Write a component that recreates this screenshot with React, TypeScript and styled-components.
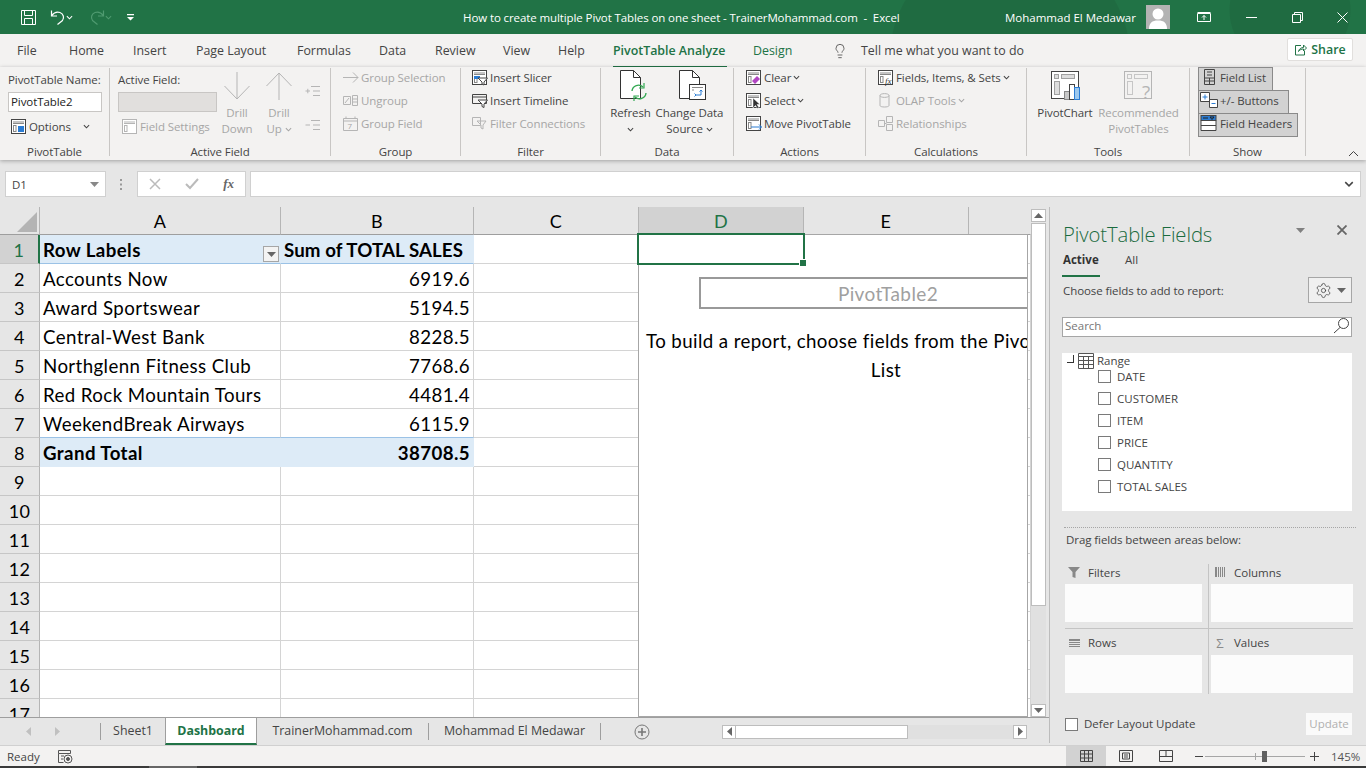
import React from "react"
import styled, { createGlobalStyle } from "styled-components"
import { Settings, Lightbulb } from "lucide-react"

const UI = `"Open Sans", "Noto Sans", sans-serif`
const CELL = `Lato, "Liberation Sans", sans-serif`

const GREEN = "#217346"
const INK = "#444"
const OFF = "#a6a6a6"
const LINE_OFF = "#b5b5b5"
const BLUE = "#2b7cd3"

const Global = createGlobalStyle`
  html, body { margin: 0; padding: 0; background: #e6e6e6; overflow: hidden; }
  * { box-sizing: border-box; }
`

const Page = styled.div`
  width: 1366px;
  height: 768px;
  display: flex;
  flex-direction: column;
  overflow: hidden;
  font-family: ${UI};
  color: ${INK};
  font-size: 11.5px;
`

/* title bar */
const TitleBar = styled.div`
  height: 34px;
  flex: none;
  display: flex;
  align-items: center;
  color: #fff;
  background:
    radial-gradient(circle at 1010px 60px, #1f6b41 0 120px, transparent 121px),
    radial-gradient(circle at 1290px 10px, #1f6b41 0 60px, transparent 61px),
    ${GREEN};
`

const Quick = styled.div`
  width: 463px;
  flex: none;
  display: flex;
  align-items: center;
  padding-left: 20px;
`

const QuickBtn = styled.div<{ $w: number }>`
  width: ${(p) => p.$w}px;
  flex: none;
  display: flex;
  align-items: center;
`

const DocTitle = styled.div`
  width: 542px;
  flex: none;
  font-size: 11.5px;
  white-space: pre;
  letter-spacing: -0.1px;
`

const UserName = styled.div`
  width: 141px;
  flex: none;
  font-size: 11.5px;
  white-space: nowrap;
`

const Avatar = styled.div`
  width: 24px;
  height: 24px;
  flex: none;
  background: #b3b3b3;
  overflow: hidden;
`

const WinBtn = styled.div<{ $w: number }>`
  width: ${(p) => p.$w}px;
  flex: none;
  display: flex;
  justify-content: center;
`

/* ribbon tabs */
const TabRow = styled.div`
  height: 33px;
  flex: none;
  background: #f3f2f1;
  display: flex;
  align-items: center;
  padding-left: 17px;
  font-size: 12.4px;
`

const MenuTab = styled.div<{ $w: number; $on?: boolean; $tool?: boolean }>`
  width: ${(p) => p.$w}px;
  flex: none;
  position: relative;
  white-space: nowrap;
  color: ${(p) => (p.$tool || p.$on ? GREEN : INK)};
  font-weight: ${(p) => (p.$on ? 600 : 400)};
`

const TabLine = styled.div`
  position: absolute;
  left: 0;
  bottom: -9px;
  width: 114px;
  height: 2px;
  background: ${GREEN};
`

const TellMe = styled.div`
  width: 455px;
  flex: none;
  display: flex;
  align-items: center;
  gap: 13px;
  white-space: nowrap;
`

const ShareBtn = styled.div`
  width: 66px;
  height: 23px;
  flex: none;
  margin-bottom: 3px;
  display: flex;
  align-items: center;
  justify-content: center;
  gap: 4px;
  background: #fff;
  border: 1px solid #e1dfdd;
  border-radius: 2px;
  color: ${GREEN};
  font-weight: 600;
`

/* ribbon */
const Ribbon = styled.div`
  height: 93px;
  flex: none;
  background: #f3f2f1;
  display: flex;
  position: relative;
  z-index: 2;
  letter-spacing: -0.08px;
  box-shadow: 0 1px 4px rgba(0, 0, 0, 0.3);
`

const Group = styled.div<{ $w: number }>`
  width: ${(p) => p.$w}px;
  flex: none;
  display: flex;
  flex-direction: column;
  position: relative;
  &::after {
    content: "";
    position: absolute;
    right: 0;
    top: 1px;
    bottom: 4px;
    width: 1px;
    background: #c8c6c4;
  }
`

const GroupBody = styled.div<{ $pad?: number }>`
  height: 73px;
  display: flex;
  padding-left: ${(p) => p.$pad ?? 0}px;
`

const GroupLabel = styled.div`
  height: 20px;
  text-align: center;
  line-height: 23px;
  padding-right: 1px;
  white-space: nowrap;
`

const Stack = styled.div<{ $w?: number }>`
  display: flex;
  flex-direction: column;
  margin-top: -1px;
  ${(p) => (p.$w ? `width: ${p.$w}px; flex: none;` : "")}
`

const ToggleStack = styled.div`
  display: flex;
  flex-direction: column;
`

const Row = styled.div<{ $off?: boolean; $in?: number }>`
  height: 23px;
  display: flex;
  align-items: center;
  gap: 2px;
  padding-left: ${(p) => p.$in ?? 0}px;
  white-space: nowrap;
  color: ${(p) => (p.$off ? OFF : INK)};
`

const OptionsText = styled.span`
  margin-right: 10px;
`

const Caption = styled.div`
  height: 24px;
  line-height: 27px;
  white-space: nowrap;
`

const NameInput = styled.div<{ $off?: boolean }>`
  width: ${(p) => (p.$off ? 99 : 94)}px;
  height: 20px;
  margin: 2px 0 3px;
  padding-left: 2px;
  line-height: 18px;
  background: ${(p) => (p.$off ? "#e1dfdd" : "#fff")};
  border: 1px solid #c8c6c4;
  color: #222;
`

const Tall = styled.div<{ $w: number; $off?: boolean }>`
  width: ${(p) => p.$w}px;
  flex: none;
  display: flex;
  flex-direction: column;
  align-items: center;
  text-align: center;
  white-space: nowrap;
  line-height: 16px;
  color: ${(p) => (p.$off ? OFF : INK)};
`

const TallIcon = styled.div`
  height: 34px;
  margin-bottom: 4px;
  display: flex;
  align-items: flex-end;
  justify-content: center;
`

const SideBtn = styled.div<{ $h: number }>`
  height: ${(p) => p.$h}px;
  padding: 14px 0 0 5px;
  display: flex;
  align-items: center;
`

const ToggleBtn = styled.div<{ $w: number }>`
  width: ${(p) => p.$w}px;
  height: 24px;
  margin-bottom: -1px;
  display: flex;
  align-items: center;
  padding: 0 0 4px 1px;
  background: #d2d2d2;
  border: 1px solid #8a8a8a;
  white-space: nowrap;
`

const Collapse = styled.div`
  position: absolute;
  right: 7px;
  bottom: 3px;
  display: flex;
`

/* formula bar */
const FormulaBar = styled.div`
  height: 47px;
  flex: none;
  background: #e6e6e6;
  display: flex;
  align-items: flex-start;
  padding: 11px 5px 0;
`

const NameBox = styled.div`
  width: 101px;
  height: 26px;
  flex: none;
  display: flex;
  align-items: center;
  justify-content: space-between;
  padding: 0 6px;
  background: #fff;
  border: 1px solid #d0d0d0;
  color: #444;
`

const Grip = styled.div`
  width: 31px;
  flex: none;
  height: 26px;
  display: flex;
  align-items: center;
  justify-content: center;
  color: #8a8a8a;
`

const FxBox = styled.div`
  width: 109px;
  height: 26px;
  flex: none;
  display: flex;
  align-items: center;
  justify-content: space-between;
  padding: 0 11px 0 11px;
  background: #fff;
  border: 1px solid #d0d0d0;
`

const FxText = styled.span`
  font-family: "Liberation Serif", serif;
  font-style: italic;
  font-weight: 700;
  font-size: 13px;
  color: #666;
`

const FormulaInput = styled.div`
  flex: 1;
  height: 26px;
  margin-left: 4px;
  display: flex;
  align-items: center;
  justify-content: flex-end;
  padding-right: 6px;
  background: #fff;
  border: 1px solid #d0d0d0;
`

/* main */
const Main = styled.div`
  height: 538px;
  flex: none;
  display: flex;
`

const Workbook = styled.div`
  width: 1049px;
  flex: none;
  display: flex;
  flex-direction: column;
`

const SheetWrap = styled.div`
  height: 510px;
  flex: none;
  display: flex;
`

const Sheet = styled.div`
  width: 1031px;
  flex: none;
  position: relative;
  overflow: hidden;
  background: #fff;
  display: grid;
  grid-template-columns: 40px 241px 193px 165px 165px 165px 62px;
  grid-template-rows: 28px repeat(17, 29px);
  font-family: ${CELL};
  font-size: 18.7px;
  letter-spacing: 0.4px;
  color: #000;
`

const Corner = styled.div`
  background: #e6e6e6;
  border-right: 1px solid #b5b5b5;
  border-bottom: 1px solid #9e9e9e;
  position: relative;
  &::after {
    content: "";
    position: absolute;
    left: 17px;
    top: 5px;
    width: 20px;
    height: 20px;
    background: #b4b4b4;
    clip-path: polygon(100% 0, 100% 100%, 0 100%);
  }
`

const ColHead = styled.div<{ $on?: boolean; $last?: boolean }>`
  display: flex;
  align-items: center;
  justify-content: center;
  font-size: 18px;
  background: ${(p) => (p.$on ? "#d2d2d2" : "#e6e6e6")};
  color: ${(p) => (p.$on ? GREEN : "#000")};
  border-right: 1px solid ${(p) => (p.$last ? "#e6e6e6" : "#b5b5b5")};
  border-bottom: 1px solid #9e9e9e;
`

const RowHead = styled.div<{ $on?: boolean }>`
  display: flex;
  align-items: center;
  justify-content: center;
  padding-top: 2px;
  font-size: 18px;
  background: ${(p) => (p.$on ? "#d2d2d2" : "#e6e6e6")};
  color: ${(p) => (p.$on ? GREEN : "#000")};
  border-right: ${(p) => (p.$on ? `2px solid ${GREEN}` : "1px solid #b5b5b5")};
  border-bottom: 1px solid #c6c6c6;
`

const Cell = styled.div<{ $kind?: "head" | "total"; $num?: boolean; $lined?: boolean; $fit?: boolean }>`
  display: flex;
  align-items: center;
  justify-content: ${(p) => (p.$num ? "flex-end" : "flex-start")};
  padding: 2px 3px 0;
  position: relative;
  white-space: nowrap;
  letter-spacing: ${(p) => (p.$fit ? 0.1 : 0.4)}px;
  font-weight: ${(p) => (p.$kind ? 700 : 400)};
  background: ${(p) => (p.$kind ? "#ddebf7" : "#fff")};
  border-right: 1px solid ${(p) => (p.$kind ? "#ddebf7" : "#d4d4d4")};
  border-bottom: 1px solid ${(p) => (p.$kind === "head" ? "#9bc2e6" : p.$lined ? "#9bc2e6" : p.$kind ? "#ddebf7" : "#d4d4d4")};
`

const FilterBtn = styled.div`
  position: absolute;
  right: 1px;
  bottom: 1px;
  width: 16px;
  height: 16px;
  background: #f3f3f3;
  border: 1px solid #a6a6a6;
  display: flex;
  align-items: center;
  justify-content: center;
`

const Placeholder = styled.div`
  position: absolute;
  left: 638px;
  top: 27px;
  width: 390px;
  bottom: 0;
  background: #fff;
  border: 1px solid #a6a6a6;
  overflow: hidden;
  display: flex;
  flex-direction: column;
  padding: 42px 0 0 60px;
`

const PivotName = styled.div`
  width: 378px;
  height: 32px;
  flex: none;
  border: 2px solid #999;
  display: flex;
  align-items: center;
  justify-content: center;
  color: #a0a0a0;
  font-size: 19px;
`

const PivotHint = styled.div`
  width: 480px;
  margin: 18px 0 0 -53px;
  flex: none;
  text-align: center;
  line-height: 29px;
  white-space: nowrap;
`

const Selected = styled.div`
  position: absolute;
  left: 637px;
  top: 26px;
  width: 168px;
  height: 32px;
  border: 2px solid ${GREEN};
  &::after {
    content: "";
    position: absolute;
    right: -3px;
    bottom: -3px;
    width: 6px;
    height: 6px;
    background: ${GREEN};
    border: 1px solid #fff;
    border-right: 0;
    border-bottom: 0;
  }
`

const VScroll = styled.div`
  width: 18px;
  flex: none;
  padding: 2px 3px 0 0;
  background: #e6e6e6;
  display: flex;
  flex-direction: column;
`

const ScrollBtn = styled.div<{ $w?: number }>`
  width: ${(p) => p.$w ?? 15}px;
  height: ${(p) => (p.$w ? 14 : 13)}px;
  flex: none;
  background: #fff;
  border: 1px solid #bdbdbd;
  display: flex;
  align-items: center;
  justify-content: center;
`

const VThumb = styled.div`
  height: 383px;
  flex: none;
  margin-top: 1px;
  background: #fff;
  border: 1px solid #bdbdbd;
`

const VTrack = styled.div`
  flex: 1;
  background: #e0e0e0;
`

/* sheet tabs */
const SheetTabs = styled.div`
  height: 28px;
  flex: none;
  display: flex;
  align-items: center;
  background: #e6e6e6;
  border-top: 1px solid #9e9e9e;
  font-size: 12.4px;
`

const TabNav = styled.div`
  width: 100px;
  height: 100%;
  flex: none;
  display: flex;
  align-items: center;
  gap: 24px;
  padding-left: 26px;
`

const SheetTab = styled.div<{ $w: number; $on?: boolean; $open?: boolean }>`
  width: ${(p) => p.$w}px;
  height: ${(p) => (p.$on ? 27 : 17)}px;
  flex: none;
  display: flex;
  align-items: center;
  justify-content: center;
  padding-bottom: ${(p) => (p.$on ? 0 : 2)}px;
  white-space: nowrap;
  color: ${(p) => (p.$on ? GREEN : INK)};
  font-weight: ${(p) => (p.$on ? 700 : 400)};
  background: ${(p) => (p.$on ? "#fff" : "transparent")};
  border-left: ${(p) => (p.$open ? "0" : "1px solid #9e9e9e")};
  border-right: ${(p) => (p.$on ? "1px solid #9e9e9e" : "0")};
  border-bottom: ${(p) => (p.$on ? `2px solid ${GREEN}` : "0")};
`

const TabEnd = styled.div`
  width: 1px;
  height: 17px;
  flex: none;
  background: #9e9e9e;
`

const AddSheet = styled.div`
  width: 82px;
  flex: none;
  display: flex;
  justify-content: center;
`

const HScroll = styled.div`
  width: 305px;
  height: 14px;
  margin-left: 39px;
  flex: none;
  display: flex;
  background: #e0e0e0;
`

const HThumb = styled.div`
  width: 172px;
  flex: none;
  background: #fff;
  border: 1px solid #bdbdbd;
  border-left: 0;
`

const HFill = styled.div`
  flex: 1;
`

/* field pane */
const Pane = styled.div`
  width: 317px;
  flex: none;
  background: #e6e6e6;
  border-left: 1px solid #bcbcbc;
  padding: 10px 14px 0 12px;
  display: flex;
  flex-direction: column;
  margin-bottom: 2px;
`

const PaneHead = styled.div`
  height: 34px;
  flex: none;
  display: flex;
  align-items: center;
  justify-content: space-between;
`

const PaneTitle = styled.div`
  font-size: 20.3px;
  font-weight: 300;
  color: #1a6b3e;
  letter-spacing: -0.1px;
  padding-left: 1px;
  white-space: nowrap;
`

const PaneTools = styled.div`
  display: flex;
  align-items: center;
  gap: 32px;
  margin-top: -8px;
  padding-right: 5px;
`

const PaneTabs = styled.div`
  height: 26px;
  flex: none;
  display: flex;
  gap: 24px;
`

const PaneTab = styled.div<{ $on?: boolean }>`
  height: 26px;
  ${(p) => (p.$on ? "width: 38px;" : "")}
  line-height: 18px;
  padding-left: 1px;
  font-weight: ${(p) => (p.$on ? 700 : 400)};
  color: ${(p) => (p.$on ? "#333" : INK)};
  border-bottom: ${(p) => (p.$on ? `2px solid ${GREEN}` : "0")};
  white-space: nowrap;
`

const ChooseRow = styled.div`
  height: 26px;
  flex: none;
  display: flex;
  align-items: center;
  justify-content: space-between;
  padding-left: 1px;
  letter-spacing: -0.08px;
`

const GearBtn = styled.div`
  width: 44px;
  height: 26px;
  display: flex;
  align-items: center;
  justify-content: center;
  gap: 5px;
  border: 1px solid #a6a6a6;
  background: #f0f0f0;
`

const SearchBox = styled.div`
  height: 20px;
  flex: none;
  margin-top: 14px;
  display: flex;
  align-items: center;
  justify-content: space-between;
  padding: 0 1px 3px 2px;
  background: #fff;
  border: 1px solid #a6a6a6;
  color: #777;
`

const FieldList = styled.div`
  height: 158px;
  flex: none;
  margin-top: 16px;
  background: #fff;
  padding: 0 0 0 4px;
`

const RangeRow = styled.div`
  height: 15px;
  margin-bottom: -3px;
  display: flex;
  align-items: center;
`

const TreeMark = styled.div`
  width: 12px;
  height: 8px;
  flex: none;
  position: relative;
  &::after {
    content: "";
    position: absolute;
    left: 1px;
    top: -2px;
    width: 6px;
    height: 7px;
    border-right: 1px solid #333;
    border-bottom: 1px solid #333;
  }
`

const RangeLabel = styled.span`
  margin-left: 3px;
`

const FieldRow = styled.div`
  height: 22px;
  display: flex;
  align-items: center;
  gap: 6px;
  padding-left: 32px;
  white-space: nowrap;
`

const Check = styled.div`
  width: 13px;
  height: 13px;
  flex: none;
  background: #fff;
  border: 1px solid #7a7a7a;
`

const Dotted = styled.div`
  flex: none;
  margin: 16px -4px 0 2px;
  border-top: 1px dotted #a6a6a6;
`

const DragLabel = styled.div`
  height: 18px;
  line-height: 18px;
  flex: none;
  margin: 3px 0 15px 4px;
  white-space: nowrap;
  letter-spacing: -0.08px;
`

const Areas = styled.div`
  margin-left: 3px;
  flex: none;
  display: grid;
  grid-template-columns: 144px 144px;
`

const AreaCell = styled.div<{ $lower?: boolean; $right?: boolean }>`
  padding-top: ${(p) => (p.$lower ? 6 : 0)}px;
  height: 65px;
  padding-right: ${(p) => (p.$right ? 0 : 6)}px;
  padding-left: ${(p) => (p.$right ? 2 : 0)}px;
  border-right: ${(p) => (p.$right ? "0" : "1px solid #c4c4c4")};
  border-bottom: ${(p) => (p.$lower ? "0" : "1px solid #c4c4c4")};
`

const AreaLabel = styled.div<{ $lower?: boolean }>`
  height: 20px;
  display: flex;
  align-items: flex-start;
  line-height: ${(p) => (p.$lower ? 16 : 18)}px;
  gap: 8px;
  padding-left: 3px;
`

const AreaIcon = styled.div`
  width: 12px;
  height: 16px;
  flex: none;
  display: flex;
  align-items: center;
  justify-content: center;
  color: #8a8a8a;
  font-size: 13px;
`

const AreaBox = styled.div`
  height: 38px;
  background: #fcfcfc;
`

const PaneFoot = styled.div`
  height: 22px;
  flex: none;
  margin: 19px 0 0 3px;
  display: flex;
  align-items: center;
  justify-content: space-between;
`

const Defer = styled.div`
  display: flex;
  align-items: center;
  gap: 6px;
  line-height: 14px;
  white-space: nowrap;
`

const UpdateBtn = styled.div`
  width: 46px;
  height: 22px;
  display: flex;
  align-items: center;
  justify-content: center;
  padding-bottom: 2px;
  background: #fafafa;
  color: #b0b0b0;
`

/* status bar */
const StatusBar = styled.div`
  height: 21px;
  flex: none;
  display: flex;
  align-items: center;
  background: #f3f2f1;
  border-top: 1px solid #d0d0d0;
  padding-left: 7px;
`

const StatusText = styled.div`
  width: 51px;
  flex: none;
`

const ViewBtn = styled.div<{ $on?: boolean }>`
  width: 40px;
  height: 20px;
  flex: none;
  display: flex;
  align-items: center;
  justify-content: center;
  background: ${(p) => (p.$on ? "#d2d2d2" : "transparent")};
`

const StatusFill = styled.div`
  width: 993px;
  flex: none;
`

const ZoomBar = styled.div`
  flex: none;
  margin-left: 9px;
  display: flex;
  align-items: center;
  gap: 2px;
`

const ZoomPlus = styled.div`
  margin-left: 3px;
  display: flex;
`

const ZoomTrack = styled.div`
  width: 100px;
  height: 1px;
  flex: none;
  background: #a6a6a6;
  position: relative;
`

const ZoomMark = styled.div`
  position: absolute;
  left: 50px;
  top: -3px;
  width: 1px;
  height: 7px;
  background: #a6a6a6;
`

const ZoomThumb = styled.div`
  position: absolute;
  left: 57px;
  top: -5px;
  width: 5px;
  height: 11px;
  background: #5f5f5f;
`

const ZoomText = styled.div`
  margin-left: 12px;
  color: #555;
`

const Taskbar = styled.div`
  height: 2px;
  flex: none;
  display: flex;
  background: #3a3a3a;
`

const TaskGap = styled.div`
  width: 149px;
  flex: none;
`

const TaskLit = styled.div`
  width: 48px;
  flex: none;
  background: #666;
`

/* icons */
type IconProps = { c?: string; children?: React.ReactNode }

function Small({ children }: IconProps) {
  return (
    <svg width="17" height="17" viewBox="0 0 17 17" fill="none" style={{ flex: "none" }}>
      {children}
    </svg>
  )
}

function Chevron({ c = INK, s = 7 }: { c?: string; s?: number }) {
  return (
    <svg width={s} height={s} viewBox="0 0 8 8" fill="none" style={{ flex: "none" }}>
      <path d="M1 2.500 4 5.500 7 2.500" stroke={c} strokeWidth="1.200" />
    </svg>
  )
}

function Tri({ c = "#666", up }: { c?: string; up?: boolean }) {
  return (
    <svg width="9" height="5" viewBox="0 0 9 5" style={{ flex: "none" }}>
      <path d={up ? "M4.500 0 9 5H0Z" : "M0 0H9L4.500 5Z"} fill={c} />
    </svg>
  )
}

function Panel({ c = INK, children }: IconProps) {
  return (
    <Small>
      <rect x="1.500" y="1.500" width="14" height="14" stroke={c} fill="#fff" />
      <path d="M3 4h11M3 5.500h11" stroke={c === INK ? "#888" : c} />
      <rect x="3.500" y="7.500" width="2.500" height="6" stroke={c === INK ? "#888" : c} />
      {children}
    </Small>
  )
}

function SaveIcon() {
  return (
    <svg width="17" height="17" viewBox="0 0 17 17" fill="none" stroke="#fff">
      <path d="M1.500 1.500h14v14h-14zM4.500 1.500v5h8v-5M4.500 15.500v-6h8v6" />
    </svg>
  )
}

function UndoIcon({ c = "#fff", flip }: { c?: string; flip?: boolean }) {
  return (
    <svg width="16" height="17" viewBox="0 0 16 17" fill="none" stroke={c} strokeWidth="1.200" style={flip ? { transform: "scaleX(-1)" } : undefined}>
      <path d="M1.500 1.500V7h5.500M1.800 6.500C4 3.500 7 2.500 10 3.500c3.500 1.200 4.500 5.500 2.500 8L7.500 15.500" />
    </svg>
  )
}

function Customize() {
  return (
    <svg width="7" height="8" viewBox="0 0 7 8">
      <path d="M0 1h7v1.200H0zM0 4h7L3.500 7.500z" fill="#fff" />
    </svg>
  )
}

function Drill({ up, c = LINE_OFF }: { up?: boolean; c?: string }) {
  return (
    <svg width="28" height="30" viewBox="0 0 28 30" fill="none" stroke={c} style={up ? { transform: "scaleY(-1)" } : undefined}>
      <path d="M14 1v27M1.500 15 14 28 26.500 15" />
    </svg>
  )
}

function PlusLines({ minus }: { minus?: boolean }) {
  return (
    <svg width="16" height="12" viewBox="0 0 16 12" fill="none" stroke={LINE_OFF}>
      <path d="M6 1.500h9M8 6h7M8 10.500h7" />
      <path d={minus ? "M0.500 6h4.500" : "M0.500 6h4.500M2.800 3.800v4.500"} />
    </svg>
  )
}

function Doc({ children }: IconProps) {
  return (
    <svg width="32" height="32" viewBox="0 0 32 32" fill="none">
      <path d="M5.500 1.500h13l7 7v21h-20z" stroke="#333" fill="#fff" />
      <path d="M18.500 1.500v7h7" stroke="#333" />
      {children}
    </svg>
  )
}

function ChartIcon({ off }: { off?: boolean }) {
  const c = off ? "#b5b5b5" : "#444"
  const g = off ? "#c6c6c6" : "#a0a0a0"
  return (
    <svg width="31" height="31" viewBox="0 0 31 31" fill="none">
      <rect x="1.500" y="1.500" width="27" height="27" stroke={c} fill={off ? "none" : "#fff"} />
      <rect x="4.500" y="4.500" width="4" height="4" stroke={g} fill={off ? "none" : "#ddd"} />
      <rect x="11.500" y="4.500" width="13" height="4" stroke={g} fill={off ? "none" : "#ddd"} />
      <rect x="4.500" y="11.500" width="5" height="13" stroke={g} fill={off ? "none" : "#ddd"} />
      {off ? (
        <text x="19" y="29" fontSize="19" fill="#b5b5b5" fontFamily={UI}>?</text>
      ) : (
        <g>
          <rect x="14.500" y="21.500" width="5" height="8" fill="#c8c8c8" stroke="#888" />
          <rect x="19.500" y="14.500" width="5" height="15" fill="#fff" stroke="#444" />
          <rect x="24.500" y="17.500" width="5" height="12" fill="#9cc8ee" stroke={BLUE} />
        </g>
      )}
    </svg>
  )
}

const FIELDS = ["DATE", "CUSTOMER", "ITEM", "PRICE", "QUANTITY", "TOTAL SALES"]

const ROWS: [string, string, ("head" | "total")?][] = [
  ["Row Labels", "Sum of TOTAL SALES", "head"],
  ["Accounts Now", "6919.6"],
  ["Award Sportswear", "5194.5"],
  ["Central-West Bank", "8228.5"],
  ["Northglenn Fitness Club", "7768.6"],
  ["Red Rock Mountain Tours", "4481.4"],
  ["WeekendBreak Airways", "6115.9"],
  ["Grand Total", "38708.5", "total"],
]

export default function App() {
  const blanks = Array.from({ length: 17 }, (_, i) => i)

  return (
    <Page>
      <Global />
      <TitleBar>
        <Quick>
          <QuickBtn $w={30}><SaveIcon /></QuickBtn>
          <QuickBtn $w={39}><UndoIcon /><Chevron c="#fff" /></QuickBtn>
          <QuickBtn $w={38}><UndoIcon c="#4f9a70" flip /><Chevron c="#4f9a70" /></QuickBtn>
          <QuickBtn $w={12}><Customize /></QuickBtn>
        </Quick>
        <DocTitle>How to create multiple Pivot Tables on one sheet - TrainerMohammad.com  -  Excel</DocTitle>
        <UserName>Mohammad El Medawar</UserName>
        <Avatar>
          <svg width="24" height="24" viewBox="0 0 24 24">
            <circle cx="12" cy="9" r="5.500" fill="#fff" />
            <path d="M3 24c0-6 3-8.500 9-8.500S21 18 21 24z" fill="#fff" />
          </svg>
        </Avatar>
        <WinBtn $w={68}>
          <svg width="14" height="12" viewBox="0 0 14 12" fill="none" stroke="#fff">
            <path d="M0.500 2.500h13v8h-13zM0.500 1.500h13M7 9V4.500M5 6.500l2-2 2 2" />
          </svg>
        </WinBtn>
        <WinBtn $w={26}>
          <svg width="11" height="1" viewBox="0 0 11 1"><path d="M0 0h11v1H0z" fill="#fff" /></svg>
        </WinBtn>
        <WinBtn $w={66}>
          <svg width="11" height="11" viewBox="0 0 11 11" fill="none" stroke="#fff">
            <path d="M0.500 2.500h8v8h-8zM2.500 2.500v-2h8v8h-2" />
          </svg>
        </WinBtn>
        <WinBtn $w={24}>
          <svg width="11" height="11" viewBox="0 0 11 11" fill="none" stroke="#fff"><path d="M0.500 0.500l10 10M10.500 0.500l-10 10" /></svg>
        </WinBtn>
      </TitleBar>

      <TabRow>
        <MenuTab $w={52}>File</MenuTab>
        <MenuTab $w={64}>Home</MenuTab>
        <MenuTab $w={63}>Insert</MenuTab>
        <MenuTab $w={101}>Page Layout</MenuTab>
        <MenuTab $w={82}>Formulas</MenuTab>
        <MenuTab $w={56}>Data</MenuTab>
        <MenuTab $w={68}>Review</MenuTab>
        <MenuTab $w={55}>View</MenuTab>
        <MenuTab $w={55}>Help</MenuTab>
        <MenuTab $w={140} $on>PivotTable Analyze<TabLine /></MenuTab>
        <MenuTab $w={79} $tool>Design</MenuTab>
        <TellMe>
          <Lightbulb size={16} strokeWidth={1.2} color="#444" />
          Tell me what you want to do
        </TellMe>
        <ShareBtn>
          <svg width="13" height="13" viewBox="0 0 13 13" fill="none" stroke={GREEN}>
            <path d="M7 2.500H1.500v9.500h9V8M4.500 8.500c.5-2.500 2.500-4 5-4V2l3 3-3 3V6c-2 0-3.500.5-5 2.500z" />
          </svg>
          Share
        </ShareBtn>
      </TabRow>

      <Ribbon>
        <Group $w={110}>
          <GroupBody $pad={8}>
            <Stack>
              <Caption>PivotTable Name:</Caption>
              <NameInput>PivotTable2</NameInput>
              <Row $in={2}>
                <Panel><rect x="8" y="8" width="6" height="6" fill={BLUE} /></Panel>
                <OptionsText>Options</OptionsText><Chevron />
              </Row>
            </Stack>
          </GroupBody>
          <GroupLabel>PivotTable</GroupLabel>
        </Group>

        <Group $w={221}>
          <GroupBody $pad={8}>
            <Stack $w={98}>
              <Caption>Active Field:</Caption>
              <NameInput $off />
              <Row $off $in={3}>
                <Panel c={LINE_OFF} />
                Field Settings
              </Row>
            </Stack>
            <Tall $w={42} $off>
              <TallIcon><Drill /></TallIcon>
              <div>Drill<br />Down</div>
            </Tall>
            <Tall $w={42} $off>
              <TallIcon><Drill up /></TallIcon>
              <div>Drill<br />Up <Chevron c={OFF} /></div>
            </Tall>
            <Stack>
              <SideBtn $h={36}><PlusLines /></SideBtn>
              <SideBtn $h={32}><PlusLines minus /></SideBtn>
            </Stack>
          </GroupBody>
          <GroupLabel>Active Field</GroupLabel>
        </Group>

        <Group $w={130}>
          <GroupBody $pad={11}>
            <Stack>
              <Row $off>
                <Small><path d="M1 8.500h15M11 3.500l5 5-5 5" stroke={LINE_OFF} /></Small>
                Group Selection
              </Row>
              <Row $off>
                <Small>
                  <path d="M1.500 4.500h7v8h-7zM10.500 3.500h5v10h-5zM10.500 7h5M10.500 10h5M3 11l4-5" stroke={LINE_OFF} />
                </Small>
                Ungroup
              </Row>
              <Row $off>
                <Small>
                  <path d="M1.500 3.500h14v12h-14zM1.500 6h14M4 1.500v2M13 1.500v2" stroke={LINE_OFF} />
                  <text x="5.500" y="14" fontSize="8" fill={OFF} fontFamily={UI}>7</text>
                </Small>
                Group Field
              </Row>
            </Stack>
          </GroupBody>
          <GroupLabel>Group</GroupLabel>
        </Group>

        <Group $w={140}>
          <GroupBody $pad={10}>
            <Stack>
              <Row>
                <Panel>
                  <rect x="3" y="7" width="6" height="3" fill={BLUE} />
                  <path d="M7 9h9.500l-3.500 4v3l-2-1v-2z" fill="#fff" stroke={INK} />
                </Panel>
                Insert Slicer
              </Row>
              <Row>
                <Small>
                  <path d="M1.500 2.500h14v9h-14zM1.500 5h14" stroke={INK} />
                  <path d="M7 8h9.500l-3.500 4v3.500l-2-1V12z" fill="#fff" stroke={INK} />
                </Small>
                Insert Timeline
              </Row>
              <Row $off>
                <Small>
                  <path d="M1.500 2.500h8v8h-8zM6 6h9l-3 4v4l-2-1v-3z" stroke={LINE_OFF} />
                </Small>
                Filter Connections
              </Row>
            </Stack>
          </GroupBody>
          <GroupLabel>Filter</GroupLabel>
        </Group>

        <Group $w={133}>
          <GroupBody $pad={0}>
            <Tall $w={59}>
              <TallIcon>
                <Doc>
                  <g transform="translate(4 2)">
                    <path d="M13 20a6.500 6.500 0 0 1 11-4M27 22a6.500 6.500 0 0 1-11 4" stroke="#33a852" strokeWidth="1.400" />
                    <path d="M25 12v5h-5M15 30v-5h5" stroke="#33a852" strokeWidth="1.200" />
                  </g>
                </Doc>
              </TallIcon>
              Refresh
              <div><Chevron /></div>
            </Tall>
            <Tall $w={59}>
              <TallIcon>
                <Doc>
                  <g transform="translate(3 1)">
                    <rect x="12.500" y="14.500" width="16" height="15" fill="#fff" stroke="#333" />
                    <path d="M15 17.500h11M15 20h2" stroke="#888" />
                    <path d="M24 20v5h-5M17.500 23.500 19 25l-1.500 1.500M22.500 21.500 24 20l1.500 1.500" stroke={BLUE} />
                  </g>
                </Doc>
              </TallIcon>
              Change Data
              <div>Source <Chevron /></div>
            </Tall>
          </GroupBody>
          <GroupLabel>Data</GroupLabel>
        </Group>

        <Group $w={132}>
          <GroupBody $pad={11}>
            <Stack>
              <Row>
                <Panel><path d="M7 12l5-5 3 3-5 5z" fill="#b146c2" /></Panel>
                Clear <Chevron />
              </Row>
              <Row>
                <Panel><path d="M8 6v10l2.500-2.500 2 3 1.500-1-2-3H15z" fill="#333" stroke="#fff" strokeWidth=".5" /></Panel>
                Select <Chevron />
              </Row>
              <Row>
                <Panel>
                  <path d="M6 12h10.500M14 9.500l2.500 2.500-2.500 2.500" stroke={BLUE} />
                </Panel>
                Move PivotTable
              </Row>
            </Stack>
          </GroupBody>
          <GroupLabel>Actions</GroupLabel>
        </Group>

        <Group $w={161}>
          <GroupBody $pad={11}>
            <Stack>
              <Row>
                <Panel>
                  <text x="8" y="15" fontSize="9" fontStyle="italic" fill="#333" fontFamily="Liberation Serif, serif">fx</text>
                </Panel>
                Fields, Items, &amp; Sets <Chevron />
              </Row>
              <Row $off>
                <Small>
                  <path d="M3 3.500c0-2.500 9-2.500 9 0v10c0 2-9 2-9 0zM3 3.500c0 2.500 9 2.500 9 0" stroke={LINE_OFF} />
                </Small>
                OLAP Tools <Chevron c={OFF} />
              </Row>
              <Row $off>
                <Small>
                  <path d="M1.500 5.500h6v6h-6zM9.500 1.500h6v6h-6zM9.500 9.500h6v6h-6zM7.500 8.500h2" stroke={LINE_OFF} />
                </Small>
                Relationships
              </Row>
            </Stack>
          </GroupBody>
          <GroupLabel>Calculations</GroupLabel>
        </Group>

        <Group $w={163}>
          <GroupBody>
            <Tall $w={76}>
              <TallIcon><ChartIcon /></TallIcon>
              PivotChart
            </Tall>
            <Tall $w={71} $off>
              <TallIcon><ChartIcon off /></TallIcon>
              Recommended<br />PivotTables
            </Tall>
          </GroupBody>
          <GroupLabel>Tools</GroupLabel>
        </Group>

        <Group $w={116}>
          <GroupBody $pad={8}>
            <ToggleStack>
              <ToggleBtn $w={75}>
                <svg width="20" height="17" viewBox="0 0 20 17" fill="none" stroke="#444" style={{ flex: "none" }}>
                  <path d="M4.500 0.500h10v15h-10zM7 3h5M7 6h5M4.500 9h10M4.500 12h10M9.500 9v6.500" />
                </svg>
                Field List
              </ToggleBtn>
              <ToggleBtn $w={91}>
                <svg width="20" height="17" viewBox="0 0 20 17" fill="none" style={{ flex: "none" }}>
                  <path d="M0.500 0.500h9v9h-9z" fill="#fff" stroke="#444" />
                  <path d="M2.500 5h5M5 2.500v5" stroke={BLUE} />
                  <path d="M9.500 7.500h8v8h-8z" fill="#fff" stroke="#444" />
                  <path d="M11.500 11.500h4" stroke={BLUE} />
                </svg>
                +/- Buttons
              </ToggleBtn>
              <ToggleBtn $w={100}>
                <svg width="20" height="17" viewBox="0 0 20 17" fill="none" style={{ flex: "none" }}>
                  <rect x="1" y="0.500" width="15" height="5" fill={BLUE} stroke="#444" />
                  <path d="M1 5.500h15v10H1zM1 10.500h15" fill="#fff" stroke="#444" />
                  <path d="M3 3h5M10 2h4l-2 2.500z" stroke="#222" />
                </svg>
                Field Headers
              </ToggleBtn>
            </ToggleStack>
          </GroupBody>
          <GroupLabel>Show</GroupLabel>
        </Group>

        <Collapse>
          <svg width="11" height="7" viewBox="0 0 11 7" fill="none" stroke="#444"><path d="M1 6l4.500-4.500L10 6" /></svg>
        </Collapse>
      </Ribbon>

      <FormulaBar>
        <NameBox>D1<Tri c="#888" /></NameBox>
        <Grip>
          <svg width="3" height="11" viewBox="0 0 3 11" fill="#999"><path d="M0 0h2v2H0zM0 4.500h2v2H0zM0 9h2v2H0z" /></svg>
        </Grip>
        <FxBox>
          <svg width="12" height="12" viewBox="0 0 12 12" fill="none" stroke="#bbb" strokeWidth="1.500"><path d="M1 1l10 10M11 1 1 11" /></svg>
          <svg width="14" height="12" viewBox="0 0 14 12" fill="none" stroke="#bbb" strokeWidth="2"><path d="M1 6l4 4 8-9" /></svg>
          <FxText>fx</FxText>
        </FxBox>
        <FormulaInput><Chevron c="#444" s={10} /></FormulaInput>
      </FormulaBar>

      <Main>
        <Workbook>
          <SheetWrap>
            <Sheet>
              <Corner />
              {["A", "B", "C", "D", "E", ""].map((h) => (
                <ColHead key={h} $on={h === "D"} $last={h === ""}>{h}</ColHead>
              ))}
              {blanks.map((i) => {
                const data = ROWS[i]
                const before = i === 6
                return (
                  <React.Fragment key={i}>
                    <RowHead $on={i === 0}>{i + 1}</RowHead>
                    <Cell $kind={data?.[2]} $lined={before}>
                      {data?.[0]}
                      {i === 0 && (
                        <FilterBtn><Tri c="#666" /></FilterBtn>
                      )}
                    </Cell>
                    <Cell $kind={data?.[2]} $num={i > 0} $fit={i === 0} $lined={before}>{data?.[1]}</Cell>
                    <Cell />
                    <Cell />
                    <Cell />
                    <Cell />
                  </React.Fragment>
                )
              })}
              <Placeholder>
                <PivotName>PivotTable2</PivotName>
                <PivotHint>To build a report, choose fields from the PivotTable Field<br />List</PivotHint>
              </Placeholder>
              <Selected />
            </Sheet>
            <VScroll>
              <ScrollBtn><Tri up /></ScrollBtn>
              <VThumb />
              <VTrack />
              <ScrollBtn><Tri /></ScrollBtn>
            </VScroll>
          </SheetWrap>
          <SheetTabs>
            <TabNav>
              <svg width="5" height="9" viewBox="0 0 5 9"><path d="M5 0v9L0 4.500z" fill="#c0c0c0" /></svg>
              <svg width="5" height="9" viewBox="0 0 5 9"><path d="M0 0v9l5-4.500z" fill="#c0c0c0" /></svg>
            </TabNav>
            <SheetTab $w={65}>Sheet1</SheetTab>
            <SheetTab $w={92} $on>Dashboard</SheetTab>
            <SheetTab $w={171} $open>TrainerMohammad.com</SheetTab>
            <SheetTab $w={172}>Mohammad El Medawar</SheetTab>
            <TabEnd />
            <AddSheet>
              <svg width="16" height="16" viewBox="0 0 16 16" fill="none" stroke="#777">
                <circle cx="8" cy="8" r="7" />
                <path d="M8 4v8M4 8h8" strokeWidth="1.600" />
              </svg>
            </AddSheet>
            <HScroll>
              <ScrollBtn $w={14}><svg width="5" height="9" viewBox="0 0 5 9"><path d="M5 0v9L0 4.500z" fill="#666" /></svg></ScrollBtn>
              <HThumb />
              <HFill />
              <ScrollBtn $w={14}><svg width="5" height="9" viewBox="0 0 5 9"><path d="M0 0v9l5-4.500z" fill="#666" /></svg></ScrollBtn>
            </HScroll>
          </SheetTabs>
        </Workbook>

        <Pane>
          <PaneHead>
            <PaneTitle>PivotTable Fields</PaneTitle>
            <PaneTools>
              <Tri c="#808080" />
              <svg width="10" height="10" viewBox="0 0 10 10" fill="none" stroke="#666" strokeWidth="1.800"><path d="M0.500 0.500l9 9M9.500 0.500l-9 9" /></svg>
            </PaneTools>
          </PaneHead>
          <PaneTabs>
            <PaneTab $on>Active</PaneTab>
            <PaneTab>All</PaneTab>
          </PaneTabs>
          <ChooseRow>
            Choose fields to add to report:
            <GearBtn>
              <Settings size={17} strokeWidth={1.1} color="#444" />
              <Tri c="#666" />
            </GearBtn>
          </ChooseRow>
          <SearchBox>
            Search
            <svg width="17" height="17" viewBox="0 0 17 17" fill="none" stroke="#444">
              <circle cx="10.500" cy="6.500" r="5" />
              <path d="M7 10.500 1 16" />
            </svg>
          </SearchBox>
          <FieldList>
            <RangeRow>
              <TreeMark />
              <svg width="16" height="16" viewBox="0 0 16 16" fill="none" stroke="#555" style={{ flex: "none" }}>
                <path d="M0.500 0.500h15v15h-15zM0.500 3.500h15M0.500 7.500h15M0.500 11.500h15M5.500 3.500v12M10.500 3.500v12" />
              </svg>
              <RangeLabel>Range</RangeLabel>
            </RangeRow>
            {FIELDS.map((f) => (
              <FieldRow key={f}><Check />{f}</FieldRow>
            ))}
          </FieldList>
          <Dotted />
          <DragLabel>Drag fields between areas below:</DragLabel>
          <Areas>
            <AreaCell>
              <AreaLabel>
                <AreaIcon><svg width="12" height="11" viewBox="0 0 12 11"><path d="M0 0h12L7.500 5v6l-3-1V5z" fill="#888" /></svg></AreaIcon>
                Filters
              </AreaLabel>
              <AreaBox />
            </AreaCell>
            <AreaCell $right>
              <AreaLabel>
                <AreaIcon><svg width="10" height="10" viewBox="0 0 10 10"><path d="M0 0h2v10H0zM3 0h1v10H3zM5 0h1v10H5zM7 0h1v10H7zM9 0h1v10H9z" fill="#888" /></svg></AreaIcon>
                Columns
              </AreaLabel>
              <AreaBox />
            </AreaCell>
            <AreaCell $lower>
              <AreaLabel $lower>
                <AreaIcon><svg width="11" height="9" viewBox="0 0 11 9"><path d="M0 0h11v2H0zM0 3h11v1H0zM0 5h11v1H0zM0 7h11v1H0z" fill="#888" /></svg></AreaIcon>
                Rows
              </AreaLabel>
              <AreaBox />
            </AreaCell>
            <AreaCell $lower $right>
              <AreaLabel $lower>
                <AreaIcon>Σ</AreaIcon>
                Values
              </AreaLabel>
              <AreaBox />
            </AreaCell>
          </Areas>
          <PaneFoot>
            <Defer><Check />Defer Layout Update</Defer>
            <UpdateBtn>Update</UpdateBtn>
          </PaneFoot>
        </Pane>
      </Main>

      <StatusBar>
        <StatusText>Ready</StatusText>
        <svg width="15" height="15" viewBox="0 0 15 15" fill="none" stroke="#555" style={{ flex: "none" }}>
          <path d="M0.500 1.500h12v3h-12zM0.500 4.500v9h5M3 7h3M3 10h2" />
          <circle cx="10" cy="10" r="4" />
          <circle cx="10" cy="10" r="1.500" fill="#555" />
        </svg>
        <StatusFill />
        <ViewBtn $on>
          <svg width="13" height="12" viewBox="0 0 13 12" fill="none" stroke="#444"><path d="M0.500 0.500h12v11H0.500zM0.500 4h12M0.500 8h12M4.500 0.500v11M8.500 0.500v11" /></svg>
        </ViewBtn>
        <ViewBtn>
          <svg width="14" height="12" viewBox="0 0 14 12" fill="none" stroke="#444"><path d="M0.500 0.500h13v11H0.500zM3.500 3h7v6h-7zM5 5h4M5 7h4" /></svg>
        </ViewBtn>
        <ViewBtn>
          <svg width="14" height="12" viewBox="0 0 14 12" fill="none" stroke="#444"><path d="M0.500 0.500h13v11H0.500zM7 0.500v6M0.500 6.500h13" /></svg>
        </ViewBtn>
        <ZoomBar>
          <svg width="8" height="1" viewBox="0 0 8 1"><path d="M0 0h8v1H0z" fill="#444" /></svg>
          <ZoomTrack><ZoomMark /><ZoomThumb /></ZoomTrack>
          <ZoomPlus>
            <svg width="9" height="9" viewBox="0 0 9 9"><path d="M4 0h1v9H4zM0 4h9v1H0z" fill="#444" /></svg>
          </ZoomPlus>
        </ZoomBar>
        <ZoomText>145%</ZoomText>
      </StatusBar>
      <Taskbar><TaskGap /><TaskLit /></Taskbar>
    </Page>
  )
}
